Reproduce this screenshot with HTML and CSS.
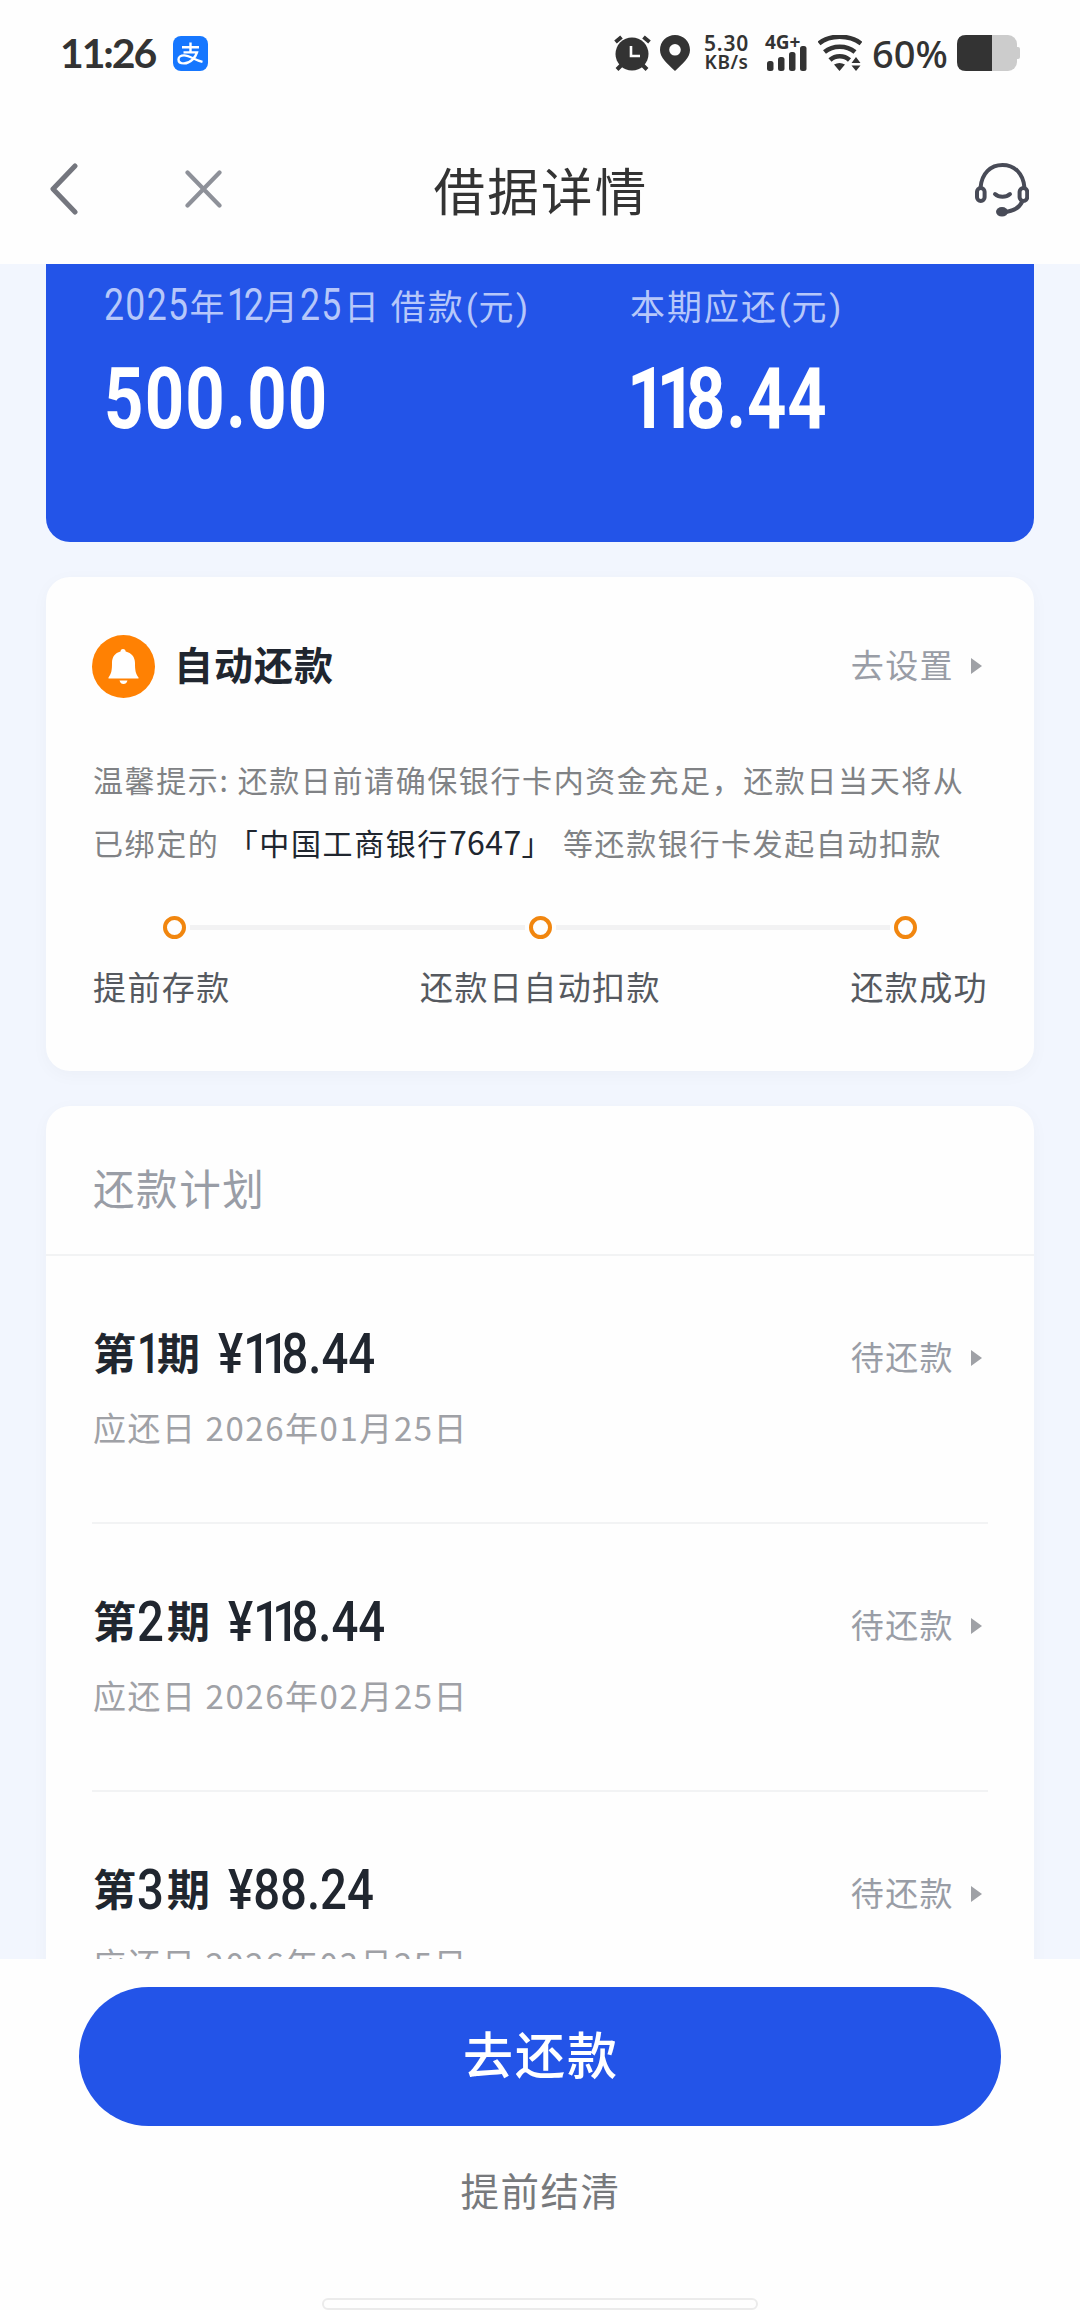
FILE: index.html
```html
<!DOCTYPE html>
<html lang="zh-CN">
<head>
<meta charset="utf-8">
<title>借据详情</title>
<link rel="stylesheet" href="styles.css">
</head>
<body>
<div class="screen">
  <div class="status">
    <span class="clock">11:26</span>
    <svg class="alipay" viewBox="0 0 35 35"><rect width="35" height="35" rx="8" fill="#1677ff"/><g fill="none" stroke="#fff" stroke-width="2.4"><path d="M9 11.2h17M17.5 6.5v10M10.5 16.4h13.5c-1.200 4.500-6.500 11-13 11-4 0-5.500-2-5.500-4 0-2.500 2.500-4 5.500-4 6 0 10 4.500 18.500 6.500" /></g></svg>
    <span class="spacer"></span>
    <svg class="alarm" viewBox="0 0 37 36"><g fill="none" stroke="#333" stroke-width="4"><path d="M1.500 7l6-5M35.500 7l-6-5M3 34.500l6-6M33 34.500l-6-6"/></g><circle cx="18" cy="19" r="16.500" fill="#333"/><path d="M17 11v10h9" fill="none" stroke="#fff" stroke-width="2.600"/></svg>
    <svg class="pin" viewBox="0 0 30 36"><path fill="#333" fill-rule="evenodd" d="M15 0C6.700 0 0 6.400 0 15c0 8 7 13 15 21 8-8 15-13 15-21C30 6.400 23.300 0 15 0zm0 9a5.800 5.800 0 1 1 0 11.600A5.800 5.800 0 0 1 15 9z"/></svg>
    <span class="speed"><span>5.30</span><span class="unit">KB/s</span></span>
    <span class="cell"><span class="net">4G+</span>
      <svg class="bars" viewBox="0 0 40 25"><g fill="#333"><rect y="15" width="6.500" height="10" rx="2.500"/><rect x="11" y="11" width="6.500" height="14" rx="2.500"/><rect x="22" y="6" width="6.500" height="19" rx="2.500"/><rect x="33" width="6.500" height="25" rx="2.500"/></g></svg>
    </span>
    <svg class="wifi" viewBox="0 0 44 36"><g fill="none" stroke="#333" stroke-width="4.600"><path d="M1 8.500C12-.5 31-.5 43 8.500M6.500 17c8.500-7 22-7 30.500 0M12 25c5.500-5 14-5 19.500 0"/></g><path fill="#333" d="M16 29.500q5.500-3 11 0L21.500 36zM33.500 28l4.500-6 4.500 6zM33.500 30.500h9L38 36z"/></svg>
    <span class="pct">60%</span>
    <svg class="battery" viewBox="0 0 63 36"><rect width="60" height="36" rx="9" fill="#ccc"/><path d="M60 12h1q2 0 2 2v8q0 2-2 2h-1z" fill="#ccc"/><path d="M35 0H9Q0 0 0 9v18q0 9 9 9h26z" fill="#333"/></svg>
  </div>

  <div class="nav">
    <div class="nav-left">
      <svg class="back" viewBox="0 0 30 52"><path d="M26 3L4 26l22 23" fill="none" stroke="#74767e" stroke-width="5" stroke-linecap="round" stroke-linejoin="round"/></svg>
      <svg class="close" viewBox="0 0 37 38"><path d="M2.500 2.500l32 33M34.500 2.500l-32 33" fill="none" stroke="#8e9199" stroke-width="4.200" stroke-linecap="round"/></svg>
    </div>
    <h1 class="title">借据详情</h1>
    <svg class="service" viewBox="0 0 54 54"><g fill="none" stroke="#484b57" stroke-width="4"><path d="M5.500 25C6.500 10 16 2 27.500 2S48.500 10 49.500 25"/><rect x="2" y="25" width="7.600" height="13" rx="3.800"/><rect x="44.600" y="25" width="7.600" height="13" rx="3.800"/><path d="M20 31c4 3.700 11 3.700 15 0" stroke-linecap="round"/><path d="M47 39c-2.500 5-8 9.500-19 10"/></g><ellipse cx="27" cy="48.800" rx="6" ry="4.800" fill="#484b57"/></svg>
  </div>

  <div class="content">
    <section class="summary">
      <div class="amount-block">
        <div class="label"><span class="din year">2025</span>年<span class="din month"><span class="one">1</span>2</span>月<span class="din day">25</span>日 借款<span class="paren">(</span>元<span class="paren">)</span></div>
        <div class="amount">500.00</div>
      </div>
      <div class="amount-block">
        <div class="label">本期应还<span class="paren">(</span>元<span class="paren">)</span></div>
        <div class="amount due-now"><span class="one">11</span>8.44</div>
      </div>
    </section>

    <section class="card autopay">
      <div class="card-head">
        <svg class="bell" viewBox="0 0 63 63"><circle cx="31.500" cy="31.500" r="31.500" fill="#ff8103"/><path fill="#fff" d="M31 14c1.800 0 2.500 1.200 2.700 2.500C39.500 18 43 22 43 28c0 7 .5 10.500 3.500 14.500v1h-30v-1C19.500 38.500 20 35 20 28c0-6 3-10 8.500-11.500.2-1.300.7-2.500 2.500-2.500zM27.500 45.500h8q-1 3.500-4 3.500t-4-3.500z"/></svg>
        <h2 class="card-title">自动还款</h2>
        <a class="action">去设置<i class="tri"></i></a>
      </div>
      <p class="tip">温馨提示: 还款日前请确保银行卡内资金充足，还款日当天将从<br>已绑定的 <b class="bank">「中国工商银行<span class="no">7647</span>」</b> 等还款银行卡发起自动扣款</p>
      <div class="track"><i class="dot"></i><i class="line"></i><i class="dot"></i><i class="line"></i><i class="dot"></i></div>
      <div class="steps"><span>提前存款</span><span>还款日自动扣款</span><span>还款成功</span></div>
    </section>

    <section class="card plan">
      <h2 class="plan-title">还款计划</h2>
      <div class="row">
        <div><div class="term">第<span class="din index narrow">1</span>期<span class="din money">¥<span class="one">11</span>8.44</span></div><div class="due">应还日 2026年01月25日</div></div>
        <a class="action">待还款<i class="tri"></i></a>
      </div>
      <div class="row">
        <div><div class="term">第<span class="din index">2</span>期<span class="din money">¥<span class="one">11</span>8.44</span></div><div class="due">应还日 2026年02月25日</div></div>
        <a class="action">待还款<i class="tri"></i></a>
      </div>
      <div class="row">
        <div><div class="term">第<span class="din index">3</span>期<span class="din money">¥88.24</span></div><div class="due">应还日 2026年03月25日</div></div>
        <a class="action">待还款<i class="tri"></i></a>
      </div>
    </section>
  </div>

  <div class="footer">
    <button class="pay">去还款</button>
    <a class="settle">提前结清</a>
    <div class="home"></div>
  </div>
</div>
</body>
</html>
```
FILE: styles.css
```css
* { box-sizing: border-box; margin: 0; padding: 0; }
body { background: #fff; font-family: "Noto Sans CJK SC", sans-serif; }
svg { display: block; flex: none; }
i { font-style: normal; }
.screen { width: 1080px; height: 2310px; display: flex; flex-direction: column; overflow: hidden; background: #fefefe; }

.status { height: 106px; flex: none; display: flex; align-items: center; padding: 0 60px 0 60px; color: #333; }
.clock { font: 700 41px/40px Lato, sans-serif; letter-spacing: -2.100px; width: 113px; }
.alipay { width: 35px; height: 35px; }
.spacer { flex: 1; }
.alarm { width: 37px; height: 36px; margin-right: 9px; }
.pin { width: 30px; height: 36px; margin-right: 13px; }
.speed { display: flex; flex-direction: column; align-items: center; width: 47px; font: 600 21px/19px "Noto Sans", sans-serif; margin-right: 15px; letter-spacing: .8px; }
.speed .unit { font-size: 19px; letter-spacing: .5px; }
.cell { width: 42px; height: 36px; margin-right: 11px; position: relative; }
.net { display: block; font: 700 19px/14px "Noto Sans", sans-serif; }
.bars { width: 40px; height: 25px; position: absolute; left: 2px; bottom: 0; }
.wifi { width: 44px; height: 36px; margin-right: 10px; }
.pct { font: 500 38px/38px "Noto Sans", sans-serif; width: 85px; }
.battery { width: 63px; height: 36px; }

.nav { height: 158px; flex: none; display: grid; grid-template-columns: 1fr auto 1fr; align-items: center; padding: 9px 51px 0 49px; }
.nav-left { display: flex; align-items: center; gap: 106px; padding-bottom: 1px; }
.back { width: 30px; height: 52px; }
.close { width: 37px; height: 38px; }
.title { font-size: 51.500px; line-height: 60px; font-weight: 400; letter-spacing: 2.300px; color: #333; padding: 0 0 2px 4px; }
.service { width: 54px; height: 54px; justify-self: end; }

.content { height: 1695px; flex: none; overflow: hidden; background: #f2f6fe; padding: 0 46px; }
.summary { height: 278px; background: #2354e8; border-radius: 0 0 24px 24px; display: grid; grid-template-columns: 526px 1fr; padding: 21px 0 0 58px; }

/* Condensed numerals, drawn taller and narrower than the Chinese text beside them */
.din { display: inline-block; font-family: Roboto, sans-serif; line-height: 0; transform-origin: 0 50%; }
.label { font-size: 35px; line-height: 40px; letter-spacing: 2px; color: #b6c7fa; white-space: nowrap; }
.label .din { font-size: 44px; letter-spacing: 1.600px; transform: scaleX(.81); }
.label .one { letter-spacing: -4px; }
.year { width: 85.500px; }
.month { width: 36.500px; }
.day { width: 44px; }
.paren { display: inline-block; width: 13.500px; font: 35px/0 Roboto, sans-serif; letter-spacing: 0; text-align: center; }
.amount { width: 300px; margin-top: 34px; font: 700 86px/80px Roboto, sans-serif; letter-spacing: 1.500px; color: #fff; transform: scaleX(.8); transform-origin: 0 50%; }
.due-now { margin-left: -3px; letter-spacing: 1px; }
.amount .one { letter-spacing: -12.500px; }

.card { background: #fefefe; border-radius: 24px; box-shadow: 0 4px 18px rgba(0, 0, 0, .03); }
.autopay { height: 494px; margin-top: 35px; padding: 58px 46px 0; }
.card-head { display: flex; align-items: center; height: 63px; }
.bell { width: 63px; height: 63px; margin-right: 19px; }
.card-title { flex: 1; font-size: 39px; line-height: 56px; letter-spacing: 1px; color: #20262f; padding-bottom: 7px; }
.action { display: flex; align-items: center; font-size: 33px; line-height: 40px; letter-spacing: 1.400px; color: #999da6; padding-right: 6px; }
.card-head .action { padding-bottom: 5px; }
.tri { width: 11px; height: 16px; margin: 4px 0 0 17px; background: #9fa1a6; clip-path: polygon(0 0, 100% 50%, 0 100%); }
.tip { margin-top: 50px; font-size: 30px; line-height: 63px; letter-spacing: 1.600px; color: #808285; white-space: nowrap; padding-left: 1px; }
.bank { font-weight: 400; color: #20262f; margin-right: 1.500px; }
.no { font-size: 32px; line-height: 0; letter-spacing: .4px; }
.track { display: flex; align-items: center; justify-content: space-between; margin-top: 42px; padding: 0 71px 0 71px; }
.dot { width: 23px; height: 23px; border: 4.500px solid #f1860f; border-radius: 50%; }
.line { flex: 1; height: 5px; margin: 0 4px; background: #f2f2f3; }
.steps { display: flex; justify-content: space-between; margin-top: 27px; padding-left: 1px; font-size: 33px; line-height: 40px; letter-spacing: 1.400px; color: #55595f; }

.plan { margin-top: 35px; height: 1000px; }
.plan-title { height: 150px; padding: 51px 46px 0 47px; border-bottom: 2px solid #f2f3f4; font-size: 41.500px; line-height: 60px; letter-spacing: 1.600px; font-weight: 400; color: #999da6; }
.row { height: 268px; margin: 0 46px; padding: 65px 0 0 1px; border-bottom: 2px solid #f2f3f4; display: flex; justify-content: space-between; align-items: flex-start; }
.row .action { margin-top: 15px; }
.term { height: 60px; font-size: 43px; font-weight: 700; line-height: 60px; color: #20262f; white-space: nowrap; }
.term .din { font-size: 55px; font-weight: 500; letter-spacing: 0; transform: scaleX(.86); vertical-align: -3px; }
.term .one { letter-spacing: -9px; }
.term .index { width: 30px; margin-left: 1px; }
.term .narrow { width: 20px; margin-left: 1px; transform: scaleX(.75); }
.money { margin-left: 18px; }
.due { font-size: 33px; line-height: 44px; letter-spacing: 1.550px; color: #9fa1a6; margin-top: 24px; white-space: nowrap; }

.footer { flex: 1; display: flex; flex-direction: column; align-items: center; padding-top: 28px; }
.pay { width: 922px; height: 139px; border: 0; border-radius: 70px; background: #2354e8; color: #fff; font: 500 50px/60px "Noto Sans CJK SC", sans-serif; letter-spacing: 2px; padding: 0 0 9px 2px; }
.settle { margin-top: 38px; font-size: 38.500px; line-height: 50px; letter-spacing: 1.500px; color: #77797c; padding-left: 1px; }
.home { margin-top: auto; width: 436px; height: 12px; border: 2px solid #ebebeb; border-radius: 6px; }
```
